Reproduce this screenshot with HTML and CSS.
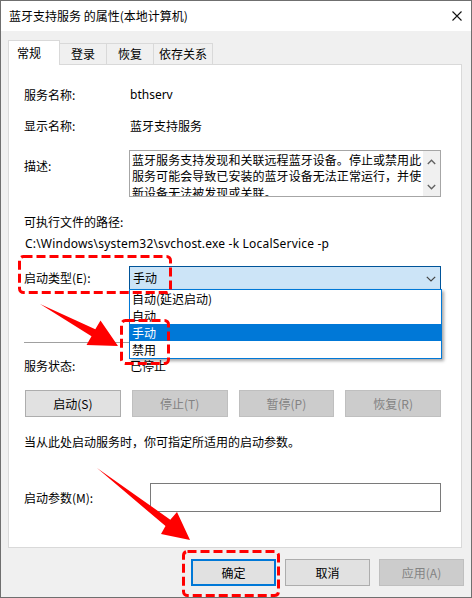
FILE: index.html
```html
<!DOCTYPE html>
<html>
<head>
<meta charset="utf-8">
<link rel="stylesheet" href="styles.css">
</head>
<body>
<div class="window">
  <div class="titlebar">
    <span class="title">蓝牙支持服务 的属性(本地计算机)</span>
    <svg class="close" width="10" height="10" viewBox="0 0 10 10"><path d="M0.5 0.5 L9.5 9.5 M9.5 0.5 L0.5 9.5" stroke="#111" stroke-width="1.1" fill="none"/></svg>
  </div>
  <div class="tabs">
    <div class="tab active t1">常规</div>
    <div class="tab t2">登录</div>
    <div class="tab t3">恢复</div>
    <div class="tab t4">依存关系</div>
  </div>
  <div class="panel">
    <div class="row r1"><span class="lbl">服务名称:</span><span class="val">bthserv</span></div>
    <div class="row r2"><span class="lbl">显示名称:</span><span class="val">蓝牙支持服务</span></div>
    <div class="row desc">
      <span class="lbl desc-lbl">描述:</span>
      <div class="textbox">
        <div class="tb-text">蓝牙服务支持发现和关联远程蓝牙设备。停止或禁用此服务可能会导致已安装的蓝牙设备无法正常运行，并使新设备无法被发现或关联。</div>
        <div class="scrollbar">
          <svg width="9" height="6" viewBox="0 0 9 6"><path d="M0.8 5 L4.5 1.2 L8.2 5" stroke="#606060" stroke-width="1.3" fill="none"/></svg>
          <svg width="9" height="6" viewBox="0 0 9 6"><path d="M0.8 1 L4.5 4.8 L8.2 1" stroke="#606060" stroke-width="1.3" fill="none"/></svg>
        </div>
      </div>
    </div>
    <div class="row r4"><span>可执行文件的路径:</span></div>
    <div class="row r5"><span class="path">C:\Windows\system32\svchost.exe -k LocalService -p</span></div>
    <div class="row combo-row">
      <span class="lbl">启动类型(E):</span>
      <div class="combo">
        <span class="combo-text">手动</span>
        <svg class="chev" width="10" height="6" viewBox="0 0 10 6"><path d="M0.8 0.8 L5 5 L9.2 0.8" stroke="#444" stroke-width="1.2" fill="none"/></svg>
        <div class="list">
          <div class="item">自动(延迟启动)</div>
          <div class="item">自动</div>
          <div class="item sel">手动</div>
          <div class="item">禁用</div>
        </div>
      </div>
    </div>
    <div class="sep"></div>
    <div class="row r7"><span class="lbl">服务状态:</span><span class="val">已停止</span></div>
    <div class="svc-buttons">
      <div class="btn">启动(S)</div>
      <div class="btn disabled">停止(T)</div>
      <div class="btn disabled">暂停(P)</div>
      <div class="btn disabled">恢复(R)</div>
    </div>
    <div class="row hint">当从此处启动服务时，你可指定所适用的启动参数。</div>
    <div class="row param">
      <span class="lbl plbl">启动参数(M):</span>
      <div class="input"></div>
    </div>
  </div>
  <div class="footer">
    <div class="btn fbtn default">确定</div>
    <div class="btn fbtn">取消</div>
    <div class="btn fbtn disabled">应用(A)</div>
  </div>
  <svg class="annot" width="472" height="598" viewBox="0 0 472 598">
    <g fill="none" stroke="#f00" stroke-width="3" stroke-dasharray="9 4">
      <rect x="19.5" y="256.5" width="151" height="36" rx="4"/>
      <rect x="121.5" y="320.5" width="47" height="43" rx="4"/>
      <rect x="183.5" y="551.5" width="95" height="44" rx="4"/>
    </g>
    <polygon fill="#f00" points="40,304 95.3,329.2 100.5,320.5 118,346 86.5,345 91.5,336.2"/>
    <polygon fill="#f00" points="97,468 170.3,519.7 177,512 190,540 161,534 165.5,526.1"/>
  </svg>
</div>
</body>
</html>
```
FILE: styles.css
```css
* { box-sizing: border-box; }
html, body { margin: 0; padding: 0; background: #fff; }
body {
  font-family: "Noto Sans CJK SC", "Noto Sans", sans-serif;
  font-size: 12px;
  color: #000;
}
.window {
  position: relative;
  width: 472px;
  height: 598px;
  border: 1px solid #6f6f6f;
  background: #f0f0f0;
  overflow: hidden;
}
.titlebar {
  height: 30px;
  background: #fff;
  display: flex;
  align-items: center;
  justify-content: space-between;
  padding: 0 9px 0 8px;
}
.title { line-height: 18px; margin-top: -1px; }
.close { display: block; margin-top: 0px; }

.tabs {
  margin-top: 9px;
  padding-left: 7px;
  height: 24px;
  display: flex;
  align-items: flex-end;
}
.tab {
  height: 21px;
  line-height: 20px;
  text-align: center;
  border: 1px solid #d9d9d9;
  border-bottom: none;
  background: #f0f0f0;
  margin-left: -1px;
}
.tab.active {
  height: 25px;
  line-height: 23px;
  background: #fff;
  margin-left: 0;
  margin-bottom: -1px;
  position: relative;
  z-index: 1;
  text-align: left;
  padding-left: 8px;
}
.t1 { width: 52px; }
.t2 { width: 48px; }
.t3 { width: 48px; }
.t4 { width: 60px; }

.panel {
  margin: 0 9px 0 7px;
  height: 484px;
  background: #fff;
  border: 1px solid #d9d9d9;
  padding: 0 20px 0 15px;
}
.row {
  display: flex;
  line-height: 18px;
  min-height: 18px;
}
.lbl { width: 105px; flex: none; }
.val { padding-left: 1px; }
.r1 .val { font-family: "Noto Sans", "Noto Sans CJK SC", sans-serif; }
.r1 { margin-top: 21px; }
.r2 { margin-top: 13px; }
.desc { margin-top: 15px; align-items: flex-start; }
.desc-lbl { margin-top: 7px; }
.textbox {
  flex: 1;
  height: 47px;
  border: 1px solid #a6a6a6;
  display: flex;
  overflow: hidden;
  background: #fff;
}
.tb-text {
  flex: 1;
  padding: 1px 0 0 2px;
  line-height: 16.4px;
  height: 45px;
  overflow: hidden;
  letter-spacing: 0.05px;
}
.scrollbar {
  width: 17px;
  flex: none;
  background: #f0f0f0;
  display: flex;
  flex-direction: column;
  justify-content: space-between;
  align-items: center;
  padding: 8px 0 6px;
}
.scrollbar svg { display: block; }
.r4 { margin-top: 16px; }
.r5 { margin-top: 4px; }
.path {
  padding-left: 1px;
  font-family: "Noto Sans", "Noto Sans CJK SC", sans-serif;
  letter-spacing: 0.2px;
}

.combo-row { margin-top: 13px; align-items: center; }
.combo {
  position: relative;
  flex: 1;
  height: 24px;
  background: #cce4f7;
  border: 1px solid #005499;
  display: flex;
  align-items: center;
  justify-content: space-between;
  padding: 0 4px 0 3px;
}
.combo-text { line-height: 18px; }
.chev { display: block; margin-top: 1px; }
.list {
  position: absolute;
  left: -1px;
  top: 22px;
  width: 313px;
  border: 1px solid #0078d7;
  background: #fff;
  box-shadow: 2px 2px 3px rgba(0, 0, 0, 0.35);
  z-index: 2;
}
.item {
  height: 17px;
  line-height: 17px;
  padding-left: 2px;
}
.item.sel { background: #0078d7; color: #fff; }

.sep {
  margin-top: 52px;
  height: 1px;
  background: #a0a0a0;
}
.r7 { margin-top: 14px; }

.svc-buttons {
  margin: 15px 0 0 1px;
  display: grid;
  grid-template-columns: repeat(4, 1fr);
  gap: 11px;
}
.btn {
  height: 27px;
  line-height: 25px;
  text-align: center;
  background: #e1e1e1;
  border: 1px solid #adadad;
}
.btn.disabled {
  background: #cccccc;
  border-color: #bfbfbf;
  color: #838383;
}
.hint { margin-top: 16px; }
.param { margin-top: 32px; align-items: center; }
.plbl { width: 126px; }
.input {
  flex: 1;
  height: 29px;
  border: 1px solid #7a7a7a;
  background: #fff;
}

.footer {
  margin-top: 11px;
  display: flex;
  justify-content: flex-end;
  gap: 9px;
  padding-right: 7px;
}
.fbtn { width: 85px; }
.fbtn.default {
  border: 2px solid #0078d7;
  line-height: 23px;
}
.annot {
  position: absolute;
  left: -1px;
  top: -1px;
  pointer-events: none;
  z-index: 5;
}
```
